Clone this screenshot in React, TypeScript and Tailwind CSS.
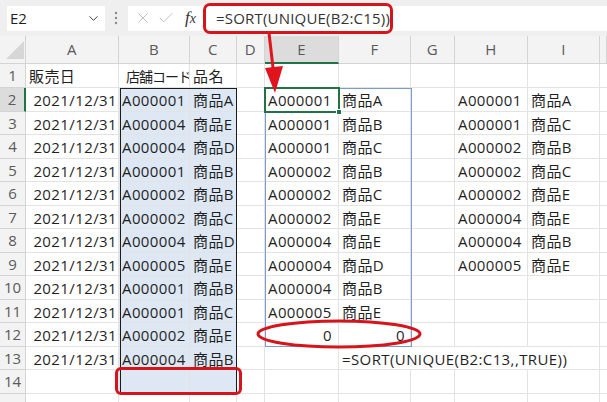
import { ChevronDown, X, Check } from "lucide-react";
import clsx from "clsx";

// 列ごとの値 (A, B, C, E, F, H, I)
type Row = { a?: string; b?: string; c?: string; e?: string; f?: string; h?: string; i?: string };

const data: Row[] = [
  { a: "販売日", b: "店舗コード", c: "品名" },
  { a: "2021/12/31", b: "A000001", c: "商品A", e: "A000001", f: "商品A", h: "A000001", i: "商品A" },
  { a: "2021/12/31", b: "A000004", c: "商品E", e: "A000001", f: "商品B", h: "A000001", i: "商品C" },
  { a: "2021/12/31", b: "A000004", c: "商品D", e: "A000001", f: "商品C", h: "A000002", i: "商品B" },
  { a: "2021/12/31", b: "A000001", c: "商品B", e: "A000002", f: "商品B", h: "A000002", i: "商品C" },
  { a: "2021/12/31", b: "A000002", c: "商品B", e: "A000002", f: "商品C", h: "A000002", i: "商品E" },
  { a: "2021/12/31", b: "A000002", c: "商品C", e: "A000002", f: "商品E", h: "A000004", i: "商品E" },
  { a: "2021/12/31", b: "A000004", c: "商品D", e: "A000004", f: "商品E", h: "A000004", i: "商品B" },
  { a: "2021/12/31", b: "A000005", c: "商品E", e: "A000004", f: "商品D", h: "A000005", i: "商品E" },
  { a: "2021/12/31", b: "A000001", c: "商品B", e: "A000004", f: "商品B" },
  { a: "2021/12/31", b: "A000001", c: "商品C", e: "A000005", f: "商品E" },
  { a: "2021/12/31", b: "A000002", c: "商品E", e: "0", f: "0" },
  { a: "2021/12/31", b: "A000004", c: "商品B" },
  {},
  {},
];

const letters = ["A", "B", "C", "D", "E", "F", "G", "H", "I", ""];

function Cell({ children, className }: { children?: React.ReactNode; className?: string }) {
  return (
    <div
      className={clsx(
        "flex items-center overflow-hidden whitespace-nowrap border-r border-b border-[#e3e3e3] px-[3px] pt-[2px]",
        className
      )}
    >
      {children}
    </div>
  );
}

export default function App() {
  return (
    <div className="relative h-[402px] w-[607px] overflow-hidden bg-white font-['Open_Sans','Noto_Sans_CJK_JP',sans-serif] text-[15px] tracking-[0.4px] text-[#1f1f1f]">
      {/* 数式バー */}
      <div className="flex h-[36px] items-center bg-[#efefef] pl-[7px]">
        <div className="flex h-[25px] w-[98px] items-center justify-between bg-white pl-[3px] pr-[4px]">
          <span className="text-[15px] tracking-normal">E2</span>
          <ChevronDown size={15} strokeWidth={1.6} className="text-[#444]" />
        </div>
        <svg width="4" height="14" viewBox="0 0 4 14" className="ml-[9px] mr-[10px]">
          <circle cx="2" cy="2" r="1.2" fill="#8a8a8a" />
          <circle cx="2" cy="7" r="1.2" fill="#8a8a8a" />
          <circle cx="2" cy="12" r="1.2" fill="#8a8a8a" />
        </svg>
        <div className="flex h-[25px] flex-1 items-center bg-white pl-[6px]">
          <X size={18} strokeWidth={1.1} className="text-[#b5b5b5]" />
          <Check size={18} strokeWidth={1.1} className="ml-[5px] text-[#b5b5b5]" />
          <span className="ml-[10px] font-['Liberation_Serif',serif] text-[17px] italic tracking-normal text-[#333]">
            f<span className="text-[14px]">x</span>
          </span>
          <span className="ml-[20px] tracking-[0.2px] text-[#333]">=SORT(UNIQUE(B2:C15))</span>
        </div>
      </div>

      {/* シート */}
      <div className="grid grid-cols-[26px_93px_71px_47px_28px_74px_72px_44px_73px_72px_1fr] grid-rows-[28px_24px_repeat(14,23.5px)]">
        <div className="relative border-r border-b border-[#d4d4d4] bg-[#f3f3f3]">
          <svg className="absolute right-[1px] bottom-[4px]" width="18" height="18" viewBox="0 0 18 18">
            <polygon points="18,0 18,18 0,18" fill="#d6d6d6" />
          </svg>
        </div>
        {letters.map((l, i) => (
          <div
            key={i}
            className={clsx(
              "flex items-center justify-center border-r border-b text-[15px] text-[#5a5a5a]",
              l === "E"
                ? "border-b-2 border-r-[#d4d4d4] border-b-[#217346] bg-[#dcdcdc]"
                : "border-[#d4d4d4] bg-[#f3f3f3]"
            )}
          >
            {l}
          </div>
        ))}

        {data.map((r, idx) => {
          const n = idx + 1;
          const inSel = n >= 2 && n <= 14;
          return [
            <div
              key={`h${n}`}
              className={clsx(
                "flex items-center justify-center border-b text-[15px] tracking-normal text-[#5a5a5a]",
                n === 2
                  ? "border-r-2 border-r-[#217346] border-b-[#d4d4d4] bg-[#dcdcdc]"
                  : "border-r border-[#d4d4d4] bg-[#f3f3f3]"
              )}
            >
              {n <= 14 ? n : ""}
            </div>,
            <Cell key={`a${n}`} className={n === 1 ? "" : "justify-end pr-[1px]"}>
              {r.a}
            </Cell>,
            <Cell key={`b${n}`} className={clsx(inSel && "bg-[#dde8f4]", n === 1 && "pl-[7px] text-[14px] tracking-[-1px]")}>
              {r.b}
            </Cell>,
            <Cell key={`c${n}`} className={clsx(inSel && "bg-[#dde8f4]")}>
              {r.c}
            </Cell>,
            <Cell key={`d${n}`} />,
            <Cell key={`e${n}`} className={n === 12 ? "justify-end pr-[6px]" : ""}>
              {r.e}
            </Cell>,
            n === 13 ? (
              <Cell key={`f${n}`} className="col-span-4">
                =SORT(UNIQUE(B2:C13,,TRUE))
              </Cell>
            ) : (
              <Cell key={`f${n}`} className={n === 12 ? "justify-end pr-[5px]" : ""}>
                {r.f}
              </Cell>
            ),
            ...(n === 13
              ? []
              : [
                  <Cell key={`g${n}`} />,
                  <Cell key={`h2${n}`}>{r.h}</Cell>,
                  <Cell key={`i${n}`}>{r.i}</Cell>,
                ]),
            <Cell key={`j${n}`} className="border-r-0" />,
          ];
        })}
      </div>

      {/* 選択範囲 B2:C14 */}
      <div className="pointer-events-none absolute top-[88px] left-[120px] h-[306px] w-[117px] border-[1.5px] border-[#1c1c1c]" />
      {/* スピル範囲 E2:F12 */}
      <div className="pointer-events-none absolute top-[88px] left-[265px] h-[259px] w-[147px] border border-[#7d9cce]" />
      {/* アクティブセル E2 */}
      <div className="pointer-events-none absolute top-[87px] left-[264px] h-[26px] w-[76px] border-2 border-[#217346]">
        <div className="absolute -right-[4px] -bottom-[4px] h-[6px] w-[6px] border border-white bg-[#217346]" />
      </div>

      {/* 赤い注釈 */}
      <div className="pointer-events-none absolute top-[3px] left-[203px] h-[31px] w-[190px] rounded-[7px] border-[3px] border-[#d6141c]" />
      <div className="pointer-events-none absolute top-[367px] left-[115px] h-[28px] w-[127px] rounded-[6px] border-[3px] border-[#d6141c]" />
      <svg className="pointer-events-none absolute top-[318px] left-[255px]" width="170" height="34" viewBox="0 0 170 34">
        <ellipse cx="84" cy="16" rx="81" ry="13" fill="none" stroke="#d6141c" strokeWidth="3" />
      </svg>
      <svg className="pointer-events-none absolute top-[30px] left-[255px]" width="32" height="66" viewBox="0 0 32 66">
        <line x1="14" y1="3" x2="18.5" y2="42" stroke="#e0141c" strokeWidth="3" />
        <polygon points="20,63 10,38 28,36" fill="#e0141c" />
      </svg>
    </div>
  );
}
